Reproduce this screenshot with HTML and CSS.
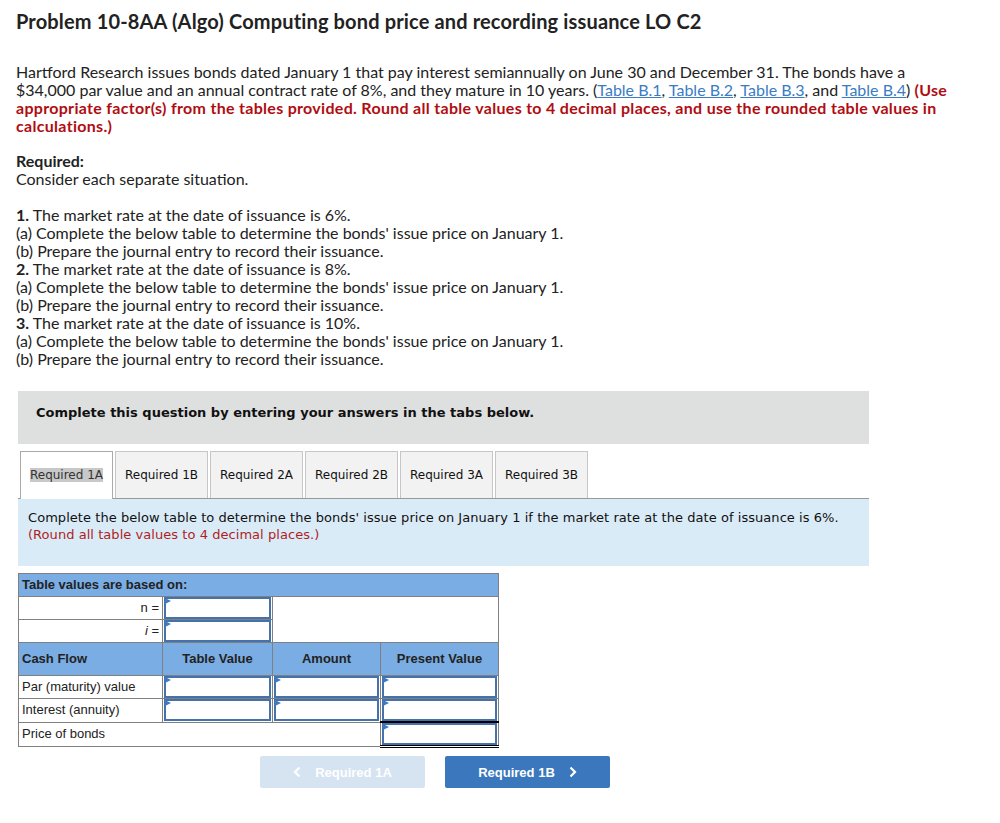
FILE: index.html
```html
<!DOCTYPE html>
<html lang="en">
<head>
<meta charset="UTF-8">
<title>Problem 10-8AA</title>
<link rel="stylesheet" href="styles.css">
</head>
<body>
<h1 class="title">Problem 10-8AA (Algo) Computing bond price and recording issuance LO C2</h1>

<p class="intro">Hartford Research issues bonds dated January 1 that pay interest semiannually on June 30 and December 31. The bonds have a $34,000 par value and an annual contract rate of 8%, and they mature in 10 years. (<a href="#">Table B.1</a>, <a href="#">Table B.2</a>, <a href="#">Table B.3</a>, and <a href="#">Table B.4</a>) <b class="red">(Use appropriate factor(s) from the tables provided. Round all table values to 4 decimal places, and use the rounded table values in calculations.)</b></p>

<p class="req"><b>Required:</b><br>Consider each separate situation.</p>

<p class="steps">
<b>1.</b> The market rate at the date of issuance is 6%.<br>
(a) Complete the below table to determine the bonds' issue price on January 1.<br>
(b) Prepare the journal entry to record their issuance.<br>
<b>2.</b> The market rate at the date of issuance is 8%.<br>
(a) Complete the below table to determine the bonds' issue price on January 1.<br>
(b) Prepare the journal entry to record their issuance.<br>
<b>3.</b> The market rate at the date of issuance is 10%.<br>
(a) Complete the below table to determine the bonds' issue price on January 1.<br>
(b) Prepare the journal entry to record their issuance.
</p>

<div class="notice">Complete this question by entering your answers in the tabs below.</div>

<div class="tabs">
    <span class="tab active"><span class="sel">Required 1A</span></span>
    <span class="tab">Required 1B</span>
    <span class="tab">Required 2A</span>
    <span class="tab">Required 2B</span>
    <span class="tab">Required 3A</span>
    <span class="tab">Required 3B</span>
</div>

<div class="info">
    Complete the below table to determine the bonds' issue price on January 1 if the market rate at the date of issuance is 6%.<br>
    <span class="hint">(Round all table values to 4 decimal places.)</span>
</div>

<table class="pv">
    <tr class="head">
        <td colspan="4">Table values are based on:</td>
    </tr>
    <tr>
        <td class="lbl">n =</td>
        <td class="inp"><span class="field"></span></td>
        <td colspan="2" rowspan="2"></td>
    </tr>
    <tr>
        <td class="lbl"><i>i</i> =</td>
        <td class="inp"><span class="field"></span></td>
    </tr>
    <tr class="head cols">
        <td class="left">Cash Flow</td>
        <td>Table Value</td>
        <td>Amount</td>
        <td>Present Value</td>
    </tr>
    <tr>
        <td>Par (maturity) value</td>
        <td class="inp"><span class="field"></span></td>
        <td class="inp"><span class="field"></span></td>
        <td class="inp"><span class="field"></span></td>
    </tr>
    <tr>
        <td>Interest (annuity)</td>
        <td class="inp"><span class="field"></span></td>
        <td class="inp"><span class="field"></span></td>
        <td class="inp"><span class="field"></span></td>
    </tr>
    <tr>
        <td colspan="3">Price of bonds</td>
        <td class="inp total"><span class="field"></span></td>
    </tr>
</table>

<div class="nav">
    <span class="btn prev">
        <svg width="8" height="12" viewBox="0 0 8 12"><path d="M6.5 1.5 2 6l4.5 4.5" fill="none" stroke="#fff" stroke-width="2.2"/></svg>
        Required 1A
    </span>
    <span class="btn next">
        Required 1B
        <svg width="8" height="12" viewBox="0 0 8 12"><path d="M1.5 1.5 6 6l-4.5 4.5" fill="none" stroke="#fff" stroke-width="2.2"/></svg>
    </span>
</div>
</body>
</html>
```

FILE: styles.css
```css
body {
    margin: 0;
    padding: 0 16px;
    font-family: Lato, "Open Sans", sans-serif;
    color: #222;
    background: #fff;
}
.title {
    margin: 9px 0 0;
    font-size: 20px;
    line-height: 24px;
    font-weight: 700;
    letter-spacing: 0.15px;
}
.intro {
    margin: 30px 0 0;
    width: 932px;
    font-size: 16px;
    line-height: 18px;
}
.intro a {
    color: #3a7cc4;
}
.red {
    color: #b00d12;
    letter-spacing: 0.3px;
}
.req, .steps {
    font-size: 16px;
    line-height: 18px;
}
.req {
    margin: 17px 0 0;
}
.steps {
    margin: 18px 0 0;
}
.notice {
    margin: 23px 0 0 2px;
    width: 851px;
    height: 53px;
    box-sizing: border-box;
    padding: 13px 18px 0;
    background: #dedfdf;
    font: bold 13px/18px "DejaVu Sans", Verdana, sans-serif;
    color: #111;
}
.tabs {
    display: flex;
    gap: 2px;
    margin: 7px 0 0 2px;
    width: 851px;
    border-bottom: 1px solid #999;
    padding-left: 2px;
    box-sizing: border-box;
}
.tab {
    width: 93px;
    height: 47px;
    box-sizing: border-box;
    border: 1px solid #c6c6c6;
    border-bottom: none;
    background: #f2f2f2;
    font: 12px/47px "DejaVu Sans", Verdana, sans-serif;
    text-align: center;
    color: #111;
}
.tab.active {
    background: #fff;
    border-color: #aaa;
    height: 48px;
    margin-bottom: -1px;
}
.sel {
    background: #c8c8c8;
    color: #333;
}
.info {
    margin-left: 2px;
    width: 851px;
    height: 67px;
    box-sizing: border-box;
    padding: 10px 10px 0;
    background: #daebf8;
    font: 13px/17px "DejaVu Sans", Verdana, sans-serif;
    letter-spacing: 0.05px;
    color: #111;
}
.hint {
    color: #b01e1e;
}
.pv {
    margin: 7px 0 0 2px;
    border-collapse: collapse;
    font: 13px/16px "Liberation Sans", Arial, sans-serif;
    color: #222;
}
.pv td {
    border: 1px solid #808080;
    height: 22px;
    padding: 0 3px;
}
.pv td:nth-child(1) { width: 137px; }
.pv tr:nth-child(4) td:nth-child(2),
.pv tr:nth-child(5) td:nth-child(2) { width: 103px; }
.pv tr:nth-child(4) td:nth-child(3) { width: 101px; }
.pv tr:nth-child(4) td:nth-child(4) { width: 111px; }
.pv .head td {
    background: #7aade3;
    font-weight: bold;
}
.pv .cols td {
    height: 32px;
    text-align: center;
}
.pv .cols td.left {
    text-align: left;
}
.pv .lbl {
    text-align: right;
}
.pv .inp {
    padding: 0;
    position: relative;
}
.field {
    display: block;
    height: 22px;
    margin: 0 1px;
    box-sizing: border-box;
    border: 2px solid #4672ab;
    background: #fff;
}
.pv .inp::before {
    content: "";
    position: absolute;
    left: 2px;
    top: 1px;
    border-left: 6px solid #3c79c6;
    border-top: 3px solid transparent;
    border-bottom: 3px solid transparent;
}
.pv .total {
    border-top: 2px solid #000;
    border-bottom: 3px double #000;
}
.nav {
    display: flex;
    gap: 20px;
    margin: 8px 0 0 244px;
}
.btn {
    width: 165px;
    height: 32px;
    border-radius: 2px;
    display: flex;
    align-items: center;
    justify-content: center;
    gap: 14px;
    font: bold 13px "Liberation Sans", Arial, sans-serif;
    color: #fff;
}
.prev {
    background: #d6e4f2;
}
.next {
    background: #3a77bc;
}
```
